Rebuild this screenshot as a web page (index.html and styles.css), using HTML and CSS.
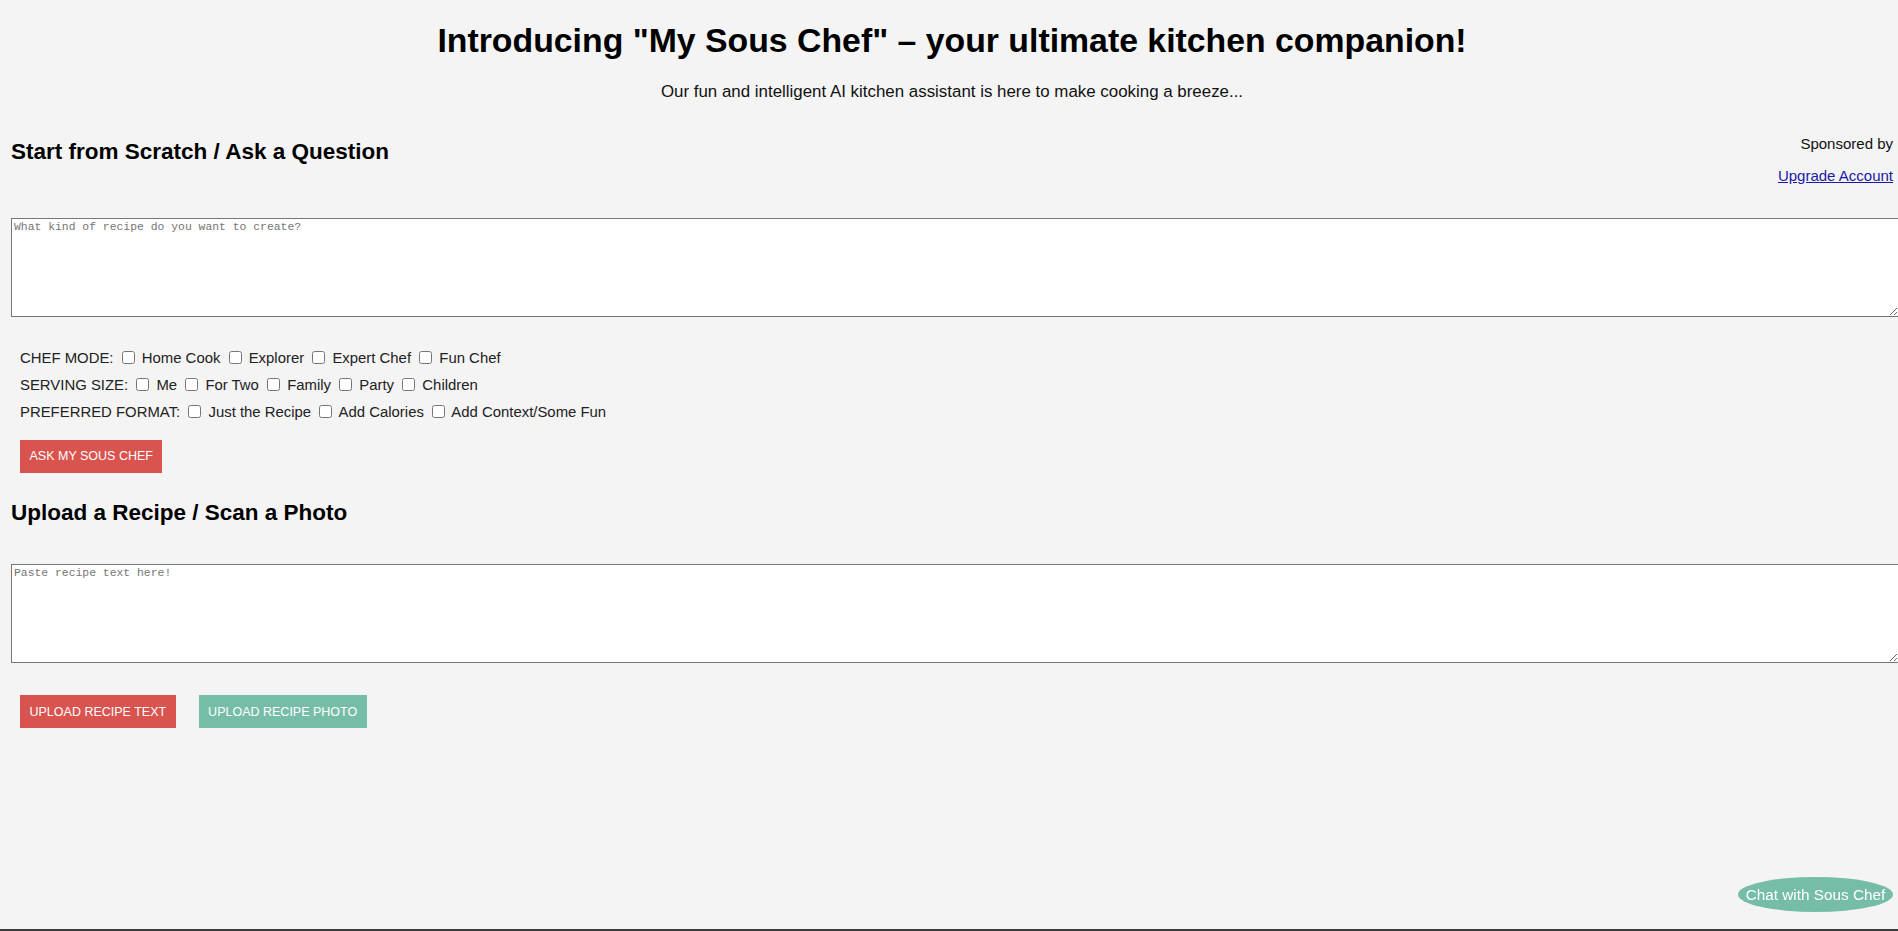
FILE: index.html
```html
<!DOCTYPE html>
<html lang="en">
<head>
<meta charset="utf-8">
<title>My Sous Chef</title>
<link rel="stylesheet" href="styles.css">
</head>
<body>
<main class="page">
  <header class="intro">
    <h1 class="title">Introducing "My Sous Chef" – your ultimate kitchen companion!</h1>
    <p class="subtitle">Our fun and intelligent AI kitchen assistant is here to make cooking a breeze...</p>
  </header>

  <section class="section">
    <div class="section-head">
      <h2 class="section-title">Start from Scratch / Ask a Question</h2>
      <div class="sponsor">
        <span class="sponsor-text">Sponsored by</span>
        <a class="upgrade" href="#">Upgrade Account</a>
      </div>
    </div>
    <textarea class="entry entry-first" placeholder="What kind of recipe do you want to create?"></textarea>
    <div class="options">
      <div class="opt-row">CHEF MODE: <input type="checkbox"> <label>Home Cook</label> <input type="checkbox"> <label>Explorer</label> <input type="checkbox"> <label>Expert Chef</label> <input type="checkbox"> <label>Fun Chef</label></div>
      <div class="opt-row">SERVING SIZE: <input type="checkbox"> <label>Me</label> <input type="checkbox"> <label>For Two</label> <input type="checkbox"> <label>Family</label> <input type="checkbox"> <label>Party</label> <input type="checkbox"> <label>Children</label></div>
      <div class="opt-row">PREFERRED FORMAT: <input type="checkbox"> <label>Just the Recipe</label> <input type="checkbox"> <label>Add Calories</label> <input type="checkbox"> <label>Add Context/Some Fun</label></div>
    </div>
    <div class="actions actions-ask">
      <button class="btn btn-red">ASK MY SOUS CHEF</button>
    </div>
  </section>

  <section class="section section-upload">
    <h2 class="section-title">Upload a Recipe / Scan a Photo</h2>
    <textarea class="entry entry-second" placeholder="Paste recipe text here!"></textarea>
    <div class="actions actions-upload">
      <button class="btn btn-red">UPLOAD RECIPE TEXT</button>
      <button class="btn btn-green">UPLOAD RECIPE PHOTO</button>
    </div>
  </section>
</main>

<button class="chat-pill">Chat with Sous Chef</button>
<div class="bottom-rule"></div>
</body>
</html>
```

FILE: styles.css
```css
html {
  overflow-x: hidden;
}

body {
  margin: 0;
  background: #f4f4f4;
  color: #222;
  font-family: "Liberation Sans", Arial, sans-serif;
  font-size: 15px;
}

.page {
  padding: 20px 5px 0 11px;
}

.intro {
  text-align: center;
}

.title {
  margin: 0;
  font-size: 33.8px;
  font-weight: bold;
  color: #000;
  line-height: 41.4px;
}

.subtitle {
  margin: 21px 0 0;
  font-size: 16.9px;
  line-height: 19.4px;
  color: #111;
}

.section-head {
  display: flex;
  justify-content: space-between;
  align-items: flex-start;
  margin-top: 33px;
}

.section-title {
  margin: 0;
  font-size: 22.5px;
  line-height: 25.6px;
  font-weight: bold;
  color: #000;
}

.section-head .section-title {
  margin-top: 4px;
}

.sponsor {
  display: flex;
  flex-direction: column;
  align-items: flex-end;
  gap: 15px;
  line-height: 17px;
  color: #111;
}

.upgrade {
  color: #1a1aa6;
}

.entry {
  display: block;
  width: 100%;
  height: 93px;
  padding: 2px;
  border: 1px solid #767676;
  background: #fff;
  font-family: "Liberation Mono", "DejaVu Sans Mono", monospace;
  font-size: 11.4px;
  resize: vertical;
  box-sizing: content-box;
}

.entry::placeholder {
  color: #757575;
}

.entry-first {
  margin-top: 34px;
}

.options {
  margin-top: 28px;
  padding-left: 9px;
}

.opt-row {
  line-height: 27.3px;
  color: #222;
  font-size: 14.9px;
}

.opt-row input {
  margin: 3px 3px 3px 4px;
  vertical-align: -1px;
  width: 13px;
  height: 13px;
}

.actions {
  display: flex;
  padding-left: 9px;
  gap: 23px;
}

.actions-ask {
  margin-top: 13px;
}

.actions-upload {
  margin-top: 32px;
}

.btn {
  height: 33px;
  padding: 0 9.5px;
  border: none;
  font-family: "Liberation Sans", Arial, sans-serif;
  font-size: 12.5px;
  color: #fff;
  cursor: pointer;
}

.btn-red {
  background: #d9534f;
}

.btn-green {
  background: #76bda8;
}

.section-upload {
  margin-top: 27px;
}

.entry-second {
  margin-top: 39px;
}

.chat-pill {
  position: fixed;
  right: 5px;
  bottom: 19px;
  width: 155px;
  height: 35px;
  padding: 0;
  border: none;
  border-radius: 50%;
  background: #76bda8;
  color: #fff;
  font-family: "Liberation Sans", Arial, sans-serif;
  font-size: 15.3px;
  cursor: pointer;
}

.bottom-rule {
  position: fixed;
  left: 0;
  right: 0;
  bottom: 0;
  height: 2px;
  background: #3c3c3c;
}
```
